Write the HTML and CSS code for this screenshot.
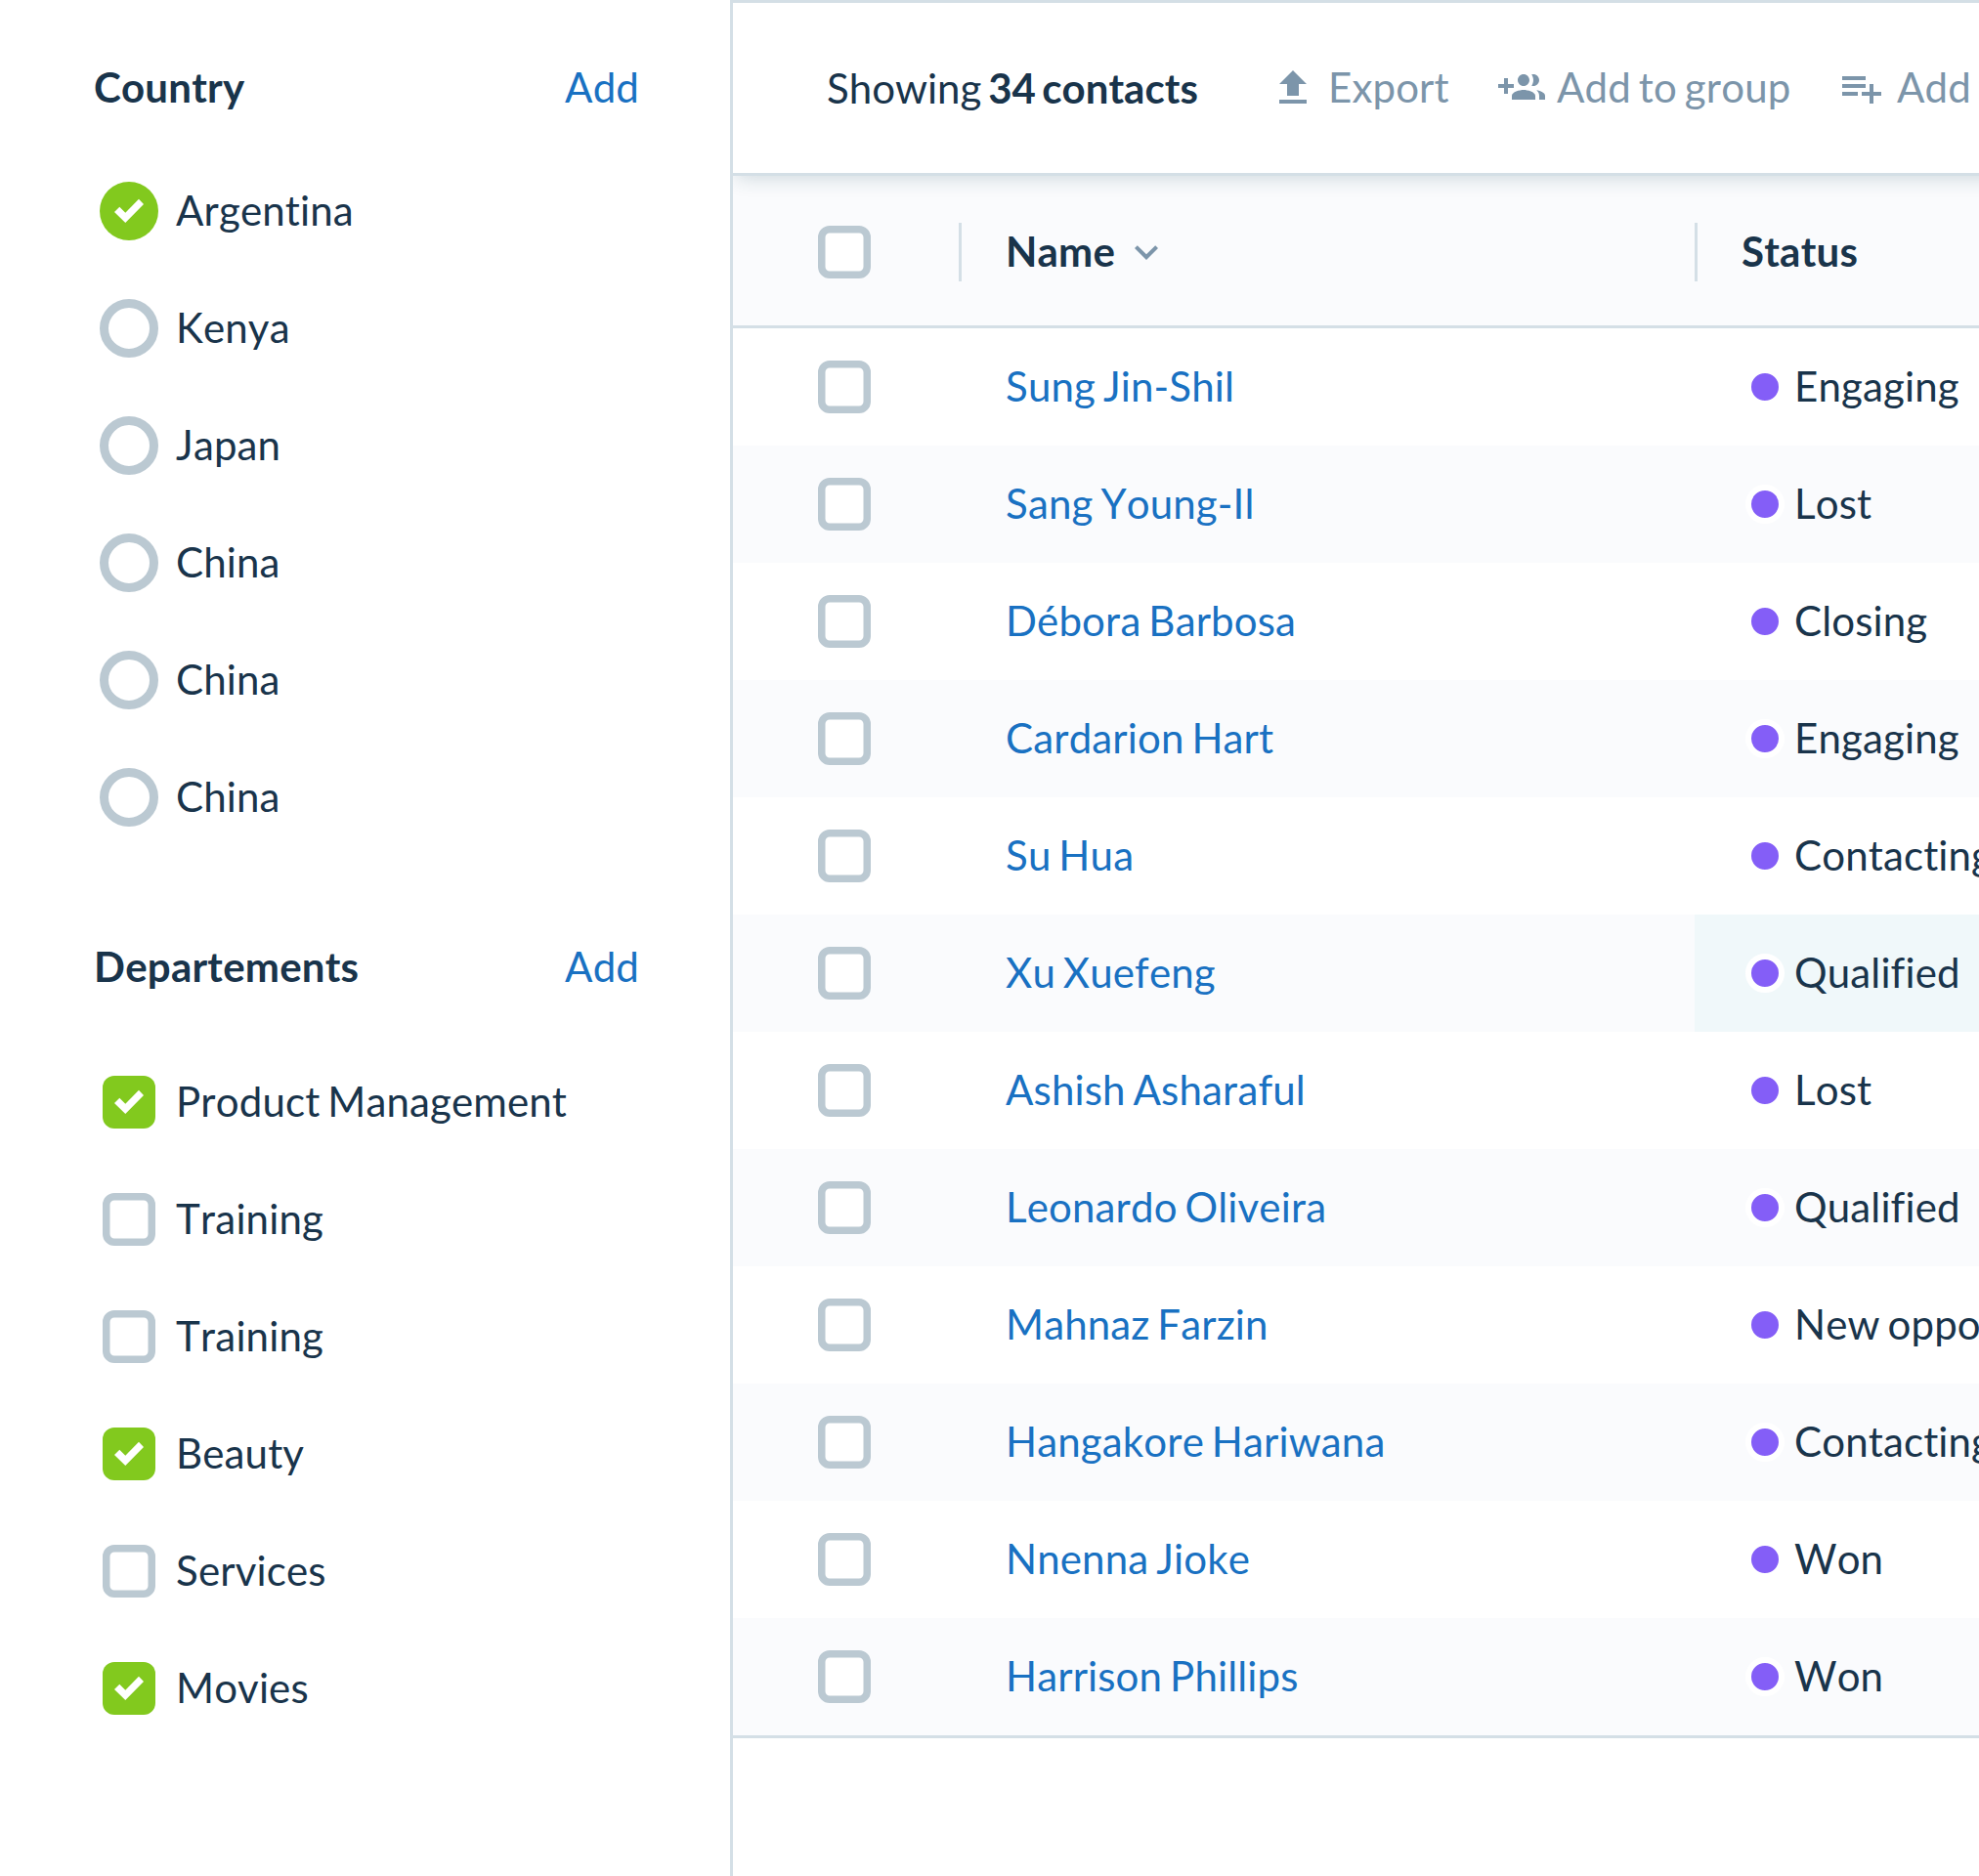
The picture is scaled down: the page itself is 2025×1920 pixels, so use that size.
FILE: index.html
```html
<!DOCTYPE html>
<html lang="en">
<head>
<meta charset="utf-8">
<title>Contacts</title>
<link rel="stylesheet" href="styles.css">
</head>
<body>
<svg width="0" height="0" class="sprite" aria-hidden="true">
  <symbol id="box" viewBox="0 0 54 54"><rect x="3.75" y="3.75" width="46.5" height="46.5" rx="8.25" fill="#fff" stroke="#bbc9d2" stroke-width="7.5"/></symbol>
  <symbol id="box-on" viewBox="0 0 54 54"><rect width="54" height="54" rx="12" fill="#82c91e"/><path d="M12 28l5.300-5.300 6 6L37 14.700l5 5.300L23.300 39z" fill="#fff"/></symbol>
  <symbol id="radio" viewBox="0 0 60 60"><circle cx="30" cy="30" r="25.500" fill="#fff" stroke="#bbc9d2" stroke-width="9"/></symbol>
  <symbol id="radio-on" viewBox="0 0 60 60"><circle cx="30" cy="30" r="30" fill="#82c91e"/><path d="M15 31l5.300-5.300 6 6L40 17.700l5 5.300L26.300 42z" fill="#fff"/></symbol>
</svg>
<div class="app">
  <aside class="sidebar">
    <section class="filter">
      <header class="filter-head"><h2>Country</h2><a class="link">Add</a></header>
      <ul>
        <li><svg class="radio"><use href="#radio-on"/></svg>Argentina</li>
        <li><svg class="radio"><use href="#radio"/></svg>Kenya</li>
        <li><svg class="radio"><use href="#radio"/></svg>Japan</li>
        <li><svg class="radio"><use href="#radio"/></svg>China</li>
        <li><svg class="radio"><use href="#radio"/></svg>China</li>
        <li><svg class="radio"><use href="#radio"/></svg>China</li>
      </ul>
    </section>
    <section class="filter departments">
      <header class="filter-head"><h2>Departements</h2><a class="link">Add</a></header>
      <ul>
        <li><svg class="box"><use href="#box-on"/></svg>Product Management</li>
        <li><svg class="box"><use href="#box"/></svg>Training</li>
        <li><svg class="box"><use href="#box"/></svg>Training</li>
        <li><svg class="box"><use href="#box-on"/></svg>Beauty</li>
        <li><svg class="box"><use href="#box"/></svg>Services</li>
        <li><svg class="box"><use href="#box-on"/></svg>Movies</li>
      </ul>
    </section>
  </aside>
  <main class="main">
    <div class="toolbar">
      <p class="count">Showing <b>34 contacts</b></p>
      <a class="action"><svg class="icon" viewBox="0 0 24 24"><path d="M9 16h6v-6h4l-7-7-7 7h4zm-4 2h14v2H5z"/></svg>Export</a>
      <a class="action"><svg class="icon" viewBox="0 0 24 24"><path d="M8 10H5V7H3v3H0v2h3v3h2v-3h3v-2zm10 1c1.660 0 2.990-1.340 2.990-3S19.660 5 18 5c-.320 0-.630.050-.910.140.570.810.900 1.790.900 2.860s-.340 2.040-.900 2.860c.280.090.590.140.910.140zm-5 0c1.660 0 2.990-1.340 2.990-3S14.660 5 13 5c-1.660 0-3 1.340-3 3s1.340 3 3 3zm6.620 2.160c.830.730 1.380 1.660 1.380 2.840v2h3v-2c0-1.540-2.370-2.490-4.380-2.840zM13 13c-2 0-6 1-6 3v2h12v-2c0-2-4-3-6-3z"/></svg>Add to group</a>
      <a class="action"><svg class="icon" viewBox="0 0 24 24"><path d="M14 10H2v2h12v-2zm0-4H2v2h12V6zm4 8v-4h-2v4h-4v2h4v4h2v-4h4v-2h-4zM2 16h8v-2H2v2z"/></svg>Add to list</a>
    </div>
    <div class="table">
      <div class="thead">
        <div class="cell check"><svg class="box"><use href="#box"/></svg></div>
        <div class="cell name">Name<svg class="icon caret" viewBox="0 0 24 24"><path d="M16.590 8.590L12 13.170 7.410 8.590 6 10l6 6 6-6z"/></svg></div>
        <div class="cell status">Status</div>
      </div>
      <div class="row"><div class="check"><svg class="box"><use href="#box"/></svg></div><a class="name link">Sung Jin-Shil</a><div class="status"><i class="dot"></i>Engaging</div></div>
      <div class="row"><div class="check"><svg class="box"><use href="#box"/></svg></div><a class="name link">Sang Young-Il</a><div class="status"><i class="dot"></i>Lost</div></div>
      <div class="row"><div class="check"><svg class="box"><use href="#box"/></svg></div><a class="name link">Débora Barbosa</a><div class="status"><i class="dot"></i>Closing</div></div>
      <div class="row"><div class="check"><svg class="box"><use href="#box"/></svg></div><a class="name link">Cardarion Hart</a><div class="status"><i class="dot"></i>Engaging</div></div>
      <div class="row"><div class="check"><svg class="box"><use href="#box"/></svg></div><a class="name link">Su Hua</a><div class="status"><i class="dot"></i>Contacting</div></div>
      <div class="row"><div class="check"><svg class="box"><use href="#box"/></svg></div><a class="name link">Xu Xuefeng</a><div class="status active"><i class="dot"></i>Qualified</div></div>
      <div class="row"><div class="check"><svg class="box"><use href="#box"/></svg></div><a class="name link">Ashish Asharaful</a><div class="status"><i class="dot"></i>Lost</div></div>
      <div class="row"><div class="check"><svg class="box"><use href="#box"/></svg></div><a class="name link">Leonardo Oliveira</a><div class="status"><i class="dot"></i>Qualified</div></div>
      <div class="row"><div class="check"><svg class="box"><use href="#box"/></svg></div><a class="name link">Mahnaz Farzin</a><div class="status"><i class="dot"></i>New opportunity</div></div>
      <div class="row"><div class="check"><svg class="box"><use href="#box"/></svg></div><a class="name link">Hangakore Hariwana</a><div class="status"><i class="dot"></i>Contacting</div></div>
      <div class="row"><div class="check"><svg class="box"><use href="#box"/></svg></div><a class="name link">Nnenna Jioke</a><div class="status"><i class="dot"></i>Won</div></div>
      <div class="row"><div class="check"><svg class="box"><use href="#box"/></svg></div><a class="name link">Harrison Phillips</a><div class="status"><i class="dot"></i>Won</div></div>
    </div>
  </main>
</div>
</body>
</html>
```
FILE: styles.css
```css
* { box-sizing: border-box; margin: 0; padding: 0; }
body { font: 42px/60px Lato, sans-serif; color: #19344b; background: #fff; font-kerning: none; font-variant-ligatures: none; letter-spacing: .14px; word-spacing: -3px; }
svg { display: block; flex: none; }
.sprite { position: absolute; }
ul { list-style: none; }
.link { color: #1971c2; }
h2, b, .thead { font-weight: 700; letter-spacing: .22px; }

/* Text sits slightly above the optical centre of its row; controls stay centred. */
.filter li, .action, .cell, .row > * { padding-bottom: 2px; }
.box, .radio, .icon, .dot { margin-top: 2px; }

.box { width: 54px; height: 54px; }
.radio { width: 60px; height: 60px; }
.icon { width: 48px; height: 48px; fill: #7c95aa; }

.app { display: grid; grid-template-columns: 747px 1278px; width: 2025px; height: 1920px; overflow: hidden; }

.sidebar { padding-top: 59px; }
.filter { height: 900px; }
.filter-head { display: flex; justify-content: space-between; padding: 0 93px 0 96px; }
.filter-head h2 { font-size: 42px; }
.filter ul { padding: 37px 0 0 102px; }
.departments ul { padding-top: 49px; }
.filter li { display: flex; align-items: center; height: 120px; gap: 18px; }
.departments li { padding-left: 3px; gap: 21px; }

.main { border: solid #d4dfe6; border-width: 3px 0 0 3px; overflow: hidden; }
.toolbar { position: relative; display: grid; grid-template-columns: 453px 234px 348px 1fr; align-items: center; width: 1320px; height: 177px; padding-left: 96px; border-bottom: 3px solid #d4dfe6; background: #fff; white-space: nowrap; box-shadow: 0 6px 18px -3px #1f4f5f30; }
.count { padding-bottom: 1px; letter-spacing: 0; word-spacing: -4px; }
.count b { letter-spacing: .05px; }
.action { display: flex; align-items: center; gap: 12px; color: #7c95aa; }

.thead, .row { display: grid; grid-template-columns: 231px 753px 291px; }
.thead { height: 156px; padding-top: 48px; border-bottom: 3px solid #d4dfe6; background: #fafbfd; }
.cell { display: flex; align-items: center; height: 60px; }
.thead .name, .thead .status { border-left: 3px solid #d4dfe6; padding-left: 45px; }
.caret { margin-left: 8px; }
.check { padding-left: 87px; }
.row { height: 120px; }
.row > * { display: flex; align-items: center; white-space: nowrap; }
.row .name { padding-left: 48px; }
.row .status { padding-left: 52px; gap: 10px; }
.row:nth-child(odd) { background: #fafbfd; }
.row .active { background: #f0f8fa; }
.row:last-child { height: 123px; border-bottom: 3px solid #d4dfe6; }
.dot { width: 40px; height: 40px; flex: none; border: 6px solid #fff; border-radius: 50%; background: #845ef7; }
```
